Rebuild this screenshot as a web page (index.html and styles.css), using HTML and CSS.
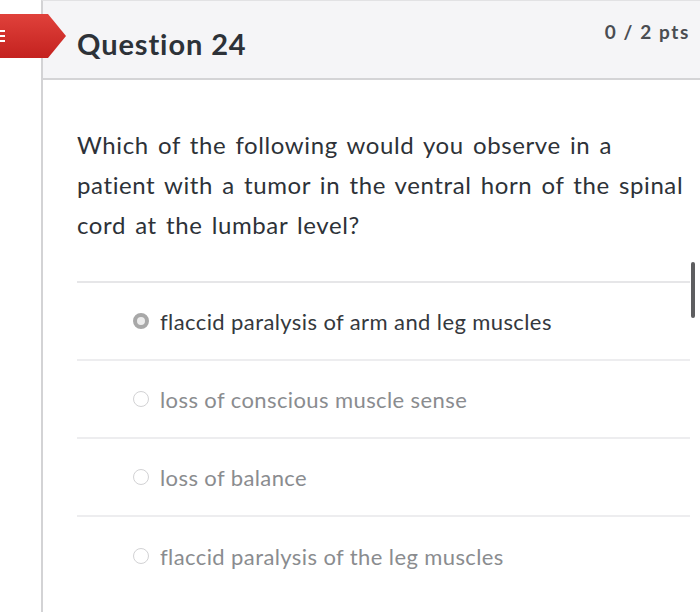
FILE: index.html
```html
<!DOCTYPE html>
<html>
<head>
<meta charset="utf-8">
<link rel="stylesheet" href="styles.css">
</head>
<body>
<div class="page">
  <div class="flag"><span class="flag-icon"><i></i><i></i><i></i></span></div>
  <div class="gutter"></div>
  <div class="card">
    <div class="card-header">
      <h2 class="title">Question 24</h2>
      <div class="pts">0 / 2 pts</div>
    </div>
    <div class="card-body">
      <p class="question">Which of the following would you observe in a patient with a tumor in the ventral horn of the spinal cord at the lumbar level?</p>
      <div class="answers">
        <div class="answer selected"><span class="radio"></span><span class="label">flaccid paralysis of arm and leg muscles</span></div>
        <div class="answer"><span class="radio"></span><span class="label">loss of conscious muscle sense</span></div>
        <div class="answer"><span class="radio"></span><span class="label">loss of balance</span></div>
        <div class="answer last"><span class="radio"></span><span class="label">flaccid paralysis of the leg muscles</span></div>
      </div>
    </div>
  </div>
  <div class="scrollbar"></div>
</div>
</body>
</html>
```

FILE: styles.css
```css
* { box-sizing: border-box; }
html, body { margin: 0; padding: 0; background: #fff; }
body { font-family: Lato, "Open Sans", sans-serif; color: #2d3b45; overflow: hidden; }
.page { position: relative; display: flex; width: 700px; height: 612px; overflow: hidden; }
.gutter { width: 41px; flex: none; }
.card { width: 700px; flex: none; border-left: 2px solid #d3d3d5; border-top: 1px solid #e2e2e4; }
.card-header { height: 79px; background: #f5f5f7; border-bottom: 2px solid #d4d4d6; display: flex; justify-content: space-between; align-items: flex-start; padding: 0 0 0 34px; width: 657px; }
.title { margin: 26px 0 0; font-size: 29px; font-weight: 700; color: #2d3238; letter-spacing: 0.9px; line-height: 34px; }
.pts { margin: 19px 10px 0 0; font-size: 19px; font-weight: 700; color: #4a4d52; line-height: 24px; letter-spacing: 1.6px; }
.card-body { padding: 45px 0 0 34px; width: 657px; }
.question { margin: 0; font-size: 24px; line-height: 40px; color: #2d3238; width: 608px; letter-spacing: 0.6px; word-spacing: 2.5px; }
.answers { margin-top: 36px; width: 613px; border-top: 2px solid #e6e6e8; }
.answer { height: 78px; display: flex; align-items: center; padding-left: 56px; border-bottom: 2px solid #ededef; }
.answer.last { border-bottom: none; }
.radio { width: 16px; height: 16px; border-radius: 50%; border: 1.5px solid #d2d2d4; flex: none; margin-right: 11px; }
.selected .radio { border: 4px solid #a8a8a8; background: #ececec; }
.label { font-size: 22px; color: #8a8c8f; letter-spacing: 0.4px; }
.selected .label { color: #34383d; }
.flag { position: absolute; left: 0; top: 14px; width: 66px; height: 44px; background: linear-gradient(#e0413b, #c4221f); clip-path: polygon(0 0, 48px 0, 66px 22px, 48px 44px, 0 44px); z-index: 2; }
.flag-icon { position: absolute; left: 0; top: 16px; width: 5px; display: flex; flex-direction: column; gap: 3px; }
.flag-icon i { display: block; height: 2px; background: #fff; }
.scrollbar { position: absolute; left: 691px; top: 262px; width: 4px; height: 56px; background: #5e5e60; border-radius: 2px; }
```
